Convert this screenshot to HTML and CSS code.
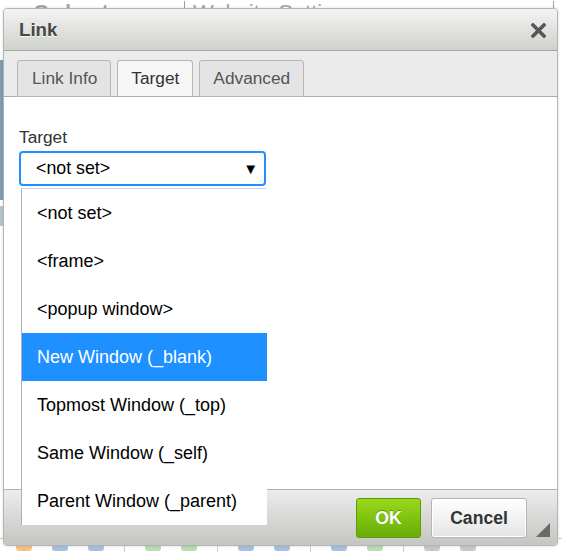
FILE: index.html
```html
<!DOCTYPE html>
<html>
<head>
<meta charset="utf-8">
<link rel="stylesheet" href="styles.css">
</head>
<body>
<div class="page">
  <div class="bg-top">
    <span class="bg-title">Select a Model</span>
    <span class="bg-select">Website Settings <span class="bg-arrow">▼</span></span>
  </div>
  <div class="bg-mid">
    <div class="bg-side">
      <div class="bg-bar"></div>
      <div class="bg-bar short"></div>
    </div>
  </div>
  <div class="bg-toolbar">
    <span class="ti orange"></span><span class="ti blue"></span><span class="ti blue"></span><span class="sep"></span><span class="ti green"></span><span class="ti green"></span><span class="sep"></span><span class="ti blue"></span><span class="ti blue"></span><span class="sep"></span><span class="ti blue"></span><span class="ti green"></span><span class="sep"></span><span class="ti gray"></span><span class="ti gray"></span>
  </div>

  <div class="dialog">
    <div class="dlg-title">
      <span class="title-text">Link</span>
      <svg class="close" width="15" height="15" viewBox="0 0 15 15" aria-label="Close">
        <path d="M2 2 L13 13 M13 2 L2 13" stroke="#575757" stroke-width="3.6" stroke-linecap="square"/>
      </svg>
    </div>
    <div class="tabs">
      <div class="tab">Link Info</div>
      <div class="tab active">Target</div>
      <div class="tab">Advanced</div>
    </div>
    <div class="content">
      <label class="field-label">Target</label>
      <div class="select">
        <span>&lt;not set&gt;</span>
        <span class="arrow">▼</span>
      </div>
    </div>
    <div class="footer">
      <button class="btn ok">OK</button>
      <button class="btn cancel">Cancel</button>
      <span class="resize"></span>
    </div>
    <ul class="dropdown">
      <li>&lt;not set&gt;</li>
      <li>&lt;frame&gt;</li>
      <li>&lt;popup window&gt;</li>
      <li class="hl">New Window (_blank)</li>
      <li>Topmost Window (_top)</li>
      <li>Same Window (_self)</li>
      <li>Parent Window (_parent)</li>
    </ul>
  </div>
</div>
</body>
</html>
```
FILE: styles.css
```css
* { box-sizing: border-box; }
html, body { margin: 0; padding: 0; background: #fff; }
body { font-family: "Liberation Sans", Arial, sans-serif; }

.page {
  position: relative;
  width: 562px;
  height: 552px;
  overflow: hidden;
  display: flex;
  flex-direction: column;
}

.bg-top {
  height: 20px;
  display: flex;
  align-items: flex-start;
  padding-top: 1px;
  color: #a8a8a8;
  font-size: 22px;
  line-height: 24px;
  overflow: hidden;
}
.bg-title { padding-left: 34px; width: 184px; font-weight: bold; letter-spacing: 2px; }
.bg-select {
  flex: 1;
  margin-right: 8px;
  border-left: 1px solid #8aa4bc;
  border-right: 1px solid #8aa4bc;
  padding-left: 8px;
  position: relative;
  height: 30px;
}
.bg-arrow { position: absolute; right: 60px; font-size: 14px; top: 2px; color: #777; }

.bg-mid { flex: 1; display: flex; }
.bg-side { width: 4px; display: flex; flex-direction: column; gap: 6px; padding-top: 40px; }
.bg-bar { height: 140px; background: #7f9fb5; }
.bg-bar.short { height: 20px; background: #b8c4cc; }

.bg-toolbar {
  height: 14px;
  display: flex;
  align-items: flex-start;
  gap: 20px;
  padding-left: 16px;
  border-top: 1px solid #ccc;
}
.ti { width: 16px; height: 10px; border-radius: 3px; margin-top: 2px; }
.ti.orange { background: #f3c08a; }
.ti.blue { background: #a8c0e0; }
.ti.green { background: #b9dcb0; }
.ti.gray { background: #c8c8c8; }
.sep { width: 1px; height: 14px; background: #ccc; }

.dialog {
  position: absolute;
  left: 3px;
  top: 8px;
  width: 555px;
  height: 538px;
  border: 1px solid #b4b4b4;
  border-radius: 4px;
  background: #fff;
  display: flex;
  flex-direction: column;
  box-shadow: 0 0 3px rgba(0,0,0,0.15);
}

.dlg-title {
  height: 42px;
  flex: none;
  border-bottom: 1px solid #a6a9a3;
  border-radius: 3px 3px 0 0;
  background: linear-gradient(#f4f4f3, #cfd1cc);
  display: flex;
  align-items: center;
  justify-content: space-between;
  padding: 0 11px 0 15px;
}
.title-text {
  font-weight: bold;
  font-size: 18.7px;
  color: #474747;
  text-shadow: 0 1px 0 rgba(255,255,255,0.8);
}
.close { display: block; margin-top: 2px; }

.tabs {
  height: 46px;
  flex: none;
  background: #ebebeb;
  border-bottom: 1px solid #acacac;
  display: flex;
  align-items: flex-end;
  gap: 6px;
  padding: 0 0 0 13px;
}
.tab {
  height: 37px;
  margin-bottom: -1px;
  padding: 0 13px;
  border: 1px solid #b6b6b6;
  border-radius: 3px 3px 0 0;
  background: #e4e4e4;
  color: #555;
  font-size: 17.3px;
  display: flex;
  align-items: center;
}
.tab:first-child { padding: 0 13px 0 14px; }
.tab.active {
  background: #f6f6f6;
  border-bottom-color: #acacac;
  color: #333;
}

.content {
  flex: 1;
  padding: 30px 15px 0 15px;
  background: #fff;
}
.field-label {
  display: block;
  font-size: 17.3px;
  color: #333;
  line-height: 20px;
  margin-bottom: 4px;
}
.select {
  width: 247px;
  height: 35px;
  border: 2px solid #1e90ff;
  border-radius: 4px;
  display: flex;
  align-items: center;
  justify-content: space-between;
  padding: 0 6px 0 15px;
  font-size: 17.8px;
  color: #000;
}
.arrow { font-size: 15px; }

.footer {
  height: 56px;
  flex: none;
  border-top: 1px solid #b0b0b0;
  background: linear-gradient(#ececec, #c4c6c1);
  border-radius: 0 0 3px 3px;
  display: flex;
  justify-content: flex-end;
  align-items: flex-start;
  gap: 10px;
  padding: 8px 30px 0 0;
  position: relative;
}
.btn {
  height: 40px;
  border-radius: 3px;
  font-family: "Liberation Sans", Arial, sans-serif;
  font-weight: bold;
  font-size: 17.6px;
  padding: 0;
}
.btn.ok {
  width: 65px;
  background: linear-gradient(#9ad81b, #67ad06);
  border: 1px solid #5c9c0a;
  color: #fff;
  text-shadow: 0 -1px 0 rgba(60,110,0,0.6);
}
.btn.cancel {
  width: 96px;
  background: linear-gradient(#fff, #e4e4e4);
  border: 1px solid #b5b5b5;
  color: #333;
  box-shadow: inset 0 0 0 1px #fff;
}
.resize {
  position: absolute;
  right: 7px;
  bottom: 8px;
  width: 0;
  height: 0;
  border-left: 14px solid transparent;
  border-bottom: 14px solid #6a6a6a;
}

.dropdown {
  position: absolute;
  left: 17px;
  top: 179px;
  width: 246px;
  margin: 0;
  padding: 0;
  list-style: none;
  background: #fff;
  border-left: 1px solid #a5b1c8;
  border-top: 1px solid #c7d5ea;
}
.dropdown li {
  height: 48px;
  display: flex;
  align-items: center;
  padding-left: 15px;
  font-size: 18px;
  color: #000;
}
.dropdown li.hl {
  background: #1e90ff;
  color: #fff;
}
```
